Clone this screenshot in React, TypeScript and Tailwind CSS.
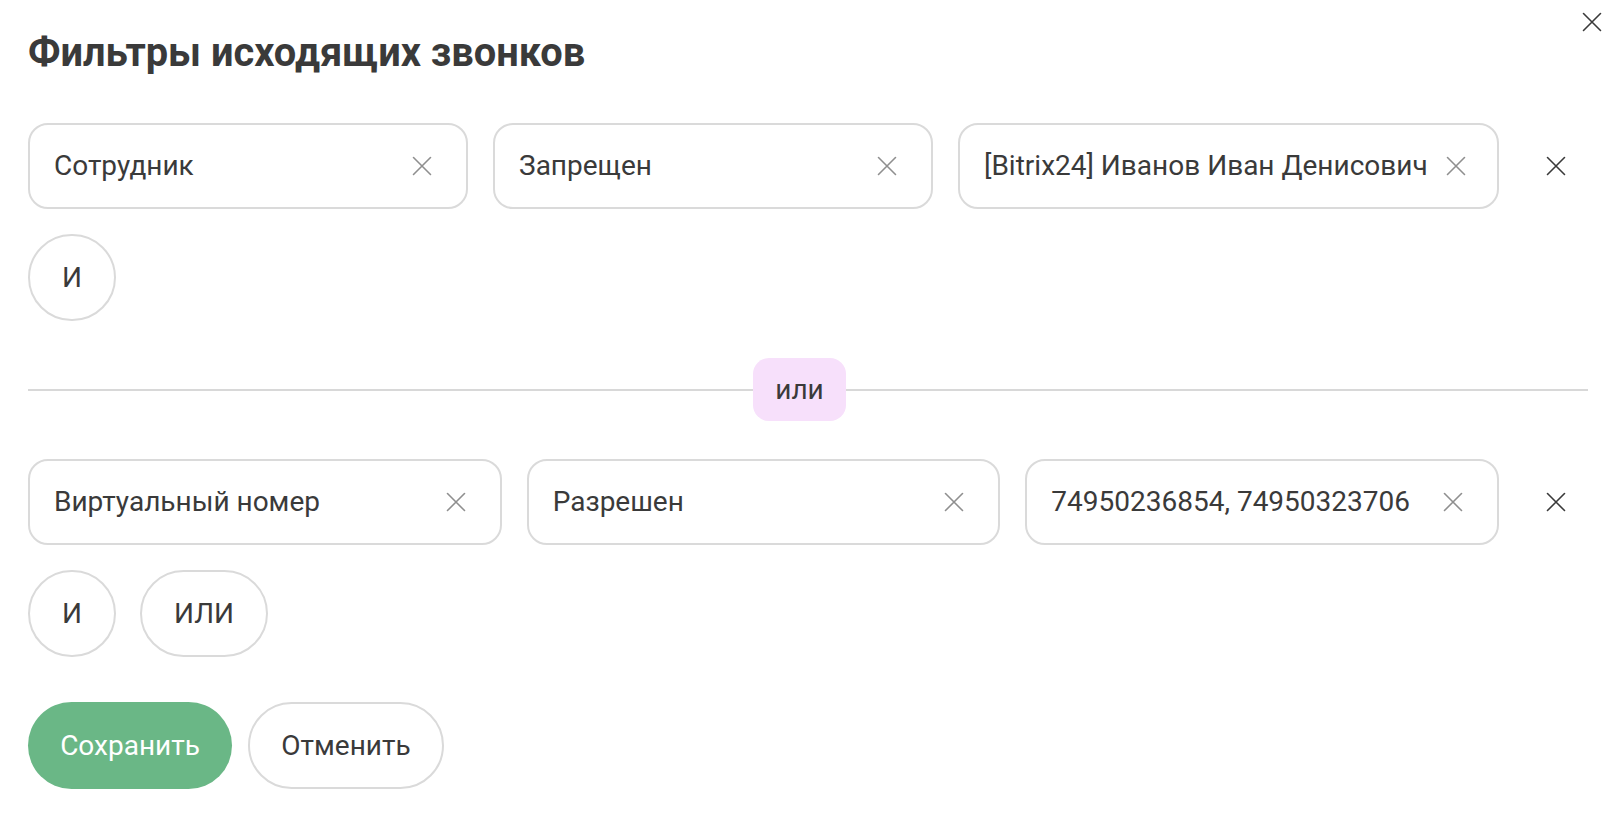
import React from "react";

const XIcon = ({ className }: { className: string }) => (
  <svg viewBox="0 0 20 20" className={className} fill="none" stroke="currentColor" strokeWidth="1.6" strokeLinecap="round">
    <path d="M1.5 1.5 L18.5 18.5 M18.5 1.5 L1.5 18.5" />
  </svg>
);

const Field = ({ text, className }: { text: string; className: string }) => (
  <div className={`h-[86px] flex items-center justify-between rounded-[20px] border-2 border-[#dadada] pl-[24px] pr-[34px] whitespace-nowrap ${className}`}>
    <span className="text-[28px] text-[#3a3a3a] leading-none">{text}</span>
    <XIcon className="w-[20px] h-[20px] text-[#8f8f8f] shrink-0 ml-[18px]" />
  </div>
);

const RemoveRow = () => (
  <div className="w-[64px] h-[86px] shrink-0 flex items-center justify-center">
    <XIcon className="w-[20px] h-[20px] text-[#3a3a3a]" />
  </div>
);

const Pill = ({ text, className }: { text: string; className: string }) => (
  <div className={`h-[87px] rounded-full border-2 border-[#dadada] flex items-center justify-center text-[28px] text-[#3a3a3a] ${className}`}>
    {text}
  </div>
);

export default function App() {
  return (
    <div className="relative min-h-[824px] bg-white pl-[28px] pr-[26px] pt-[29px]" style={{ fontFamily: "Roboto, 'Noto Sans', sans-serif" }}>
      <button className="absolute top-[12px] right-[12px] w-[20px] h-[20px] text-[#3a3a3a]">
        <XIcon className="w-[20px] h-[20px]" />
      </button>
      <h1 className="text-[39.8px] leading-[48px] font-bold text-[#3a3a3a]">Фильтры исходящих звонков</h1>

      <div className="mt-[46px] flex gap-[25px]">
        <Field text="Сотрудник" className="flex-1 min-w-0" />
        <Field text="Запрещен" className="flex-1 min-w-0" />
        <Field text="[Bitrix24] Иванов Иван Денисович" className="w-[541px] shrink-0" />
        <RemoveRow />
      </div>
      <div className="mt-[25px] flex gap-[25px]">
        <Pill text="И" className="w-[88px]" />
      </div>

      <div className="mt-[37px] flex items-center">
        <div className="w-[725px] h-[2px] bg-[#d8d8d8]" />
        <div className="w-[93px] h-[63px] rounded-[16px] bg-[#f7e0fb] flex items-center justify-center text-[28px] text-[#3a3a3a]">или</div>
        <div className="flex-1 h-[2px] bg-[#d8d8d8]" />
      </div>

      <div className="mt-[38px] flex gap-[25px]">
        <Field text="Виртуальный номер" className="flex-1 min-w-0" />
        <Field text="Разрешен" className="flex-1 min-w-0" />
        <Field text="74950236854, 74950323706" className="flex-1 min-w-0" />
        <RemoveRow />
      </div>
      <div className="mt-[25px] flex gap-[24px]">
        <Pill text="И" className="w-[88px]" />
        <Pill text="ИЛИ" className="w-[128px]" />
      </div>

      <div className="mt-[45px] flex gap-[16px]">
        <button className="h-[87px] w-[204px] rounded-full bg-[#6ab786] text-white text-[28px]">Сохранить</button>
        <button className="h-[87px] w-[196px] rounded-full border-2 border-[#dadada] text-[#3a3a3a] text-[28px]">Отменить</button>
      </div>
    </div>
  );
}
